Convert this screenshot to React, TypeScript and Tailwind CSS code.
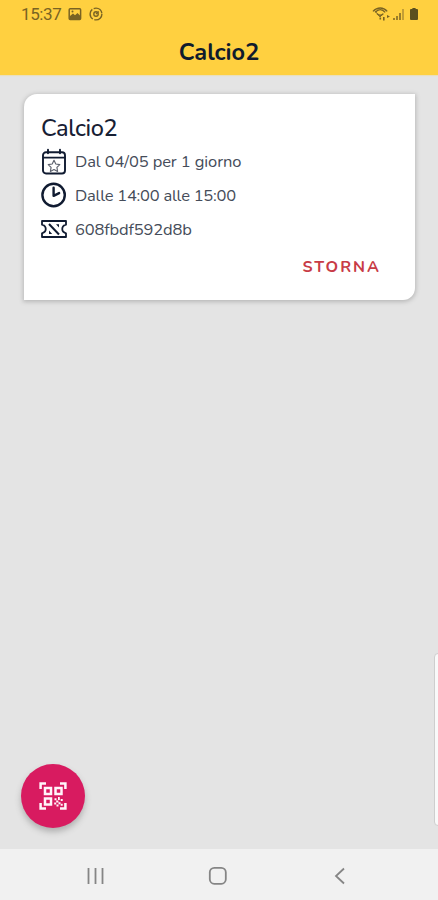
import React from "react";

function StatusBar() {
  return (
    <div className="flex h-7 items-center pl-[21px] pr-[19px] font-['Roboto',sans-serif] text-[#796323]">
      <span className="w-[47px] text-[17px] leading-7 tracking-[-0.4px]">15:37</span>
      <svg className="mr-[7px]" width="14" height="14" viewBox="0 0 14 14">
        <rect x="1.2" y="1.8" width="11.4" height="10.6" rx="1" fill="none" stroke="currentColor" strokeWidth="1.5" />
        <path d="M2 12V9l3-2.5 2 1.7L9.5 6 12 8.5V12z" fill="currentColor" />
        <circle cx="4.5" cy="4.5" r="1" fill="currentColor" />
      </svg>
      <svg width="14" height="14" viewBox="0 0 14 14" fill="none" stroke="currentColor" strokeWidth="1.4">
        <circle cx="7" cy="7" r="5.9" strokeDasharray="10.8 1.55" />
        <circle cx="7" cy="7" r="2.2" />
        <path d="M7 7l2.8-2.5" strokeWidth="1.1" />
      </svg>
      <svg className="ml-auto" width="47" height="16" viewBox="0 0 47 16" fill="none">
        <path d="M1 5.4C5.2.8 11.3.8 15.2 5.4M3.2 6.4c3-3.7 7-3.7 10 0M5 7.6c2 2.2 4.4 2.2 6.4 0" stroke="currentColor" strokeWidth="1.4" />
        <path d="M3 5l5 6 3-3" stroke="currentColor" strokeWidth=".9" />
        <path d="M7.5 11.5h1.6v2H7.5zM11 11h1.6v3.5H11zM15 9l3 1.5-3 1.5z" fill="currentColor" />
        <path d="M21 12h2v2h-2zM24 10h2v4h-2zM27 7h2v7h-2z" fill="#9b7e2a" />
        <path d="M30 3h2v11h-2z" fill="#c49f35" />
        <path d="M38 4q0-1 1-1h1.4V2h3.2v1H45q1 0 1 1v9q0 1-1 1h-6q-1 0-1-1z" fill="#5b501f" />
      </svg>
    </div>
  );
}

function CalendarIcon() {
  return (
    <svg width="26" height="28" viewBox="0 0 26 28" fill="none" stroke="#101b31" strokeWidth="1.9" strokeLinecap="round">
      <rect x="2" y="4.3" width="22" height="21.2" rx="3" />
      <path d="M2.5 9.6h21M7 1.7v3.5M19 1.7v3.5" />
      <path d="M13 12.3l1.8 3.7 4 .6-2.9 2.8.7 4-3.6-1.9-3.6 1.9.7-4-2.9-2.8 4-.6z" stroke="#5d626e" strokeWidth="1.15" strokeLinejoin="round" />
    </svg>
  );
}

function ClockIcon() {
  return (
    <svg className="-translate-y-px" width="26" height="26" viewBox="0 0 26 26" fill="none" stroke="#101b31" strokeWidth="2.4">
      <circle cx="12.6" cy="13" r="11.2" />
      <path d="M12.6 5.8v8l5.5-2.7" strokeLinejoin="round" strokeLinecap="round" />
    </svg>
  );
}

function TicketIcon() {
  return (
    <svg className="-translate-y-px" width="26" height="20" viewBox="0 0 26 20" fill="none" stroke="#101b31" strokeWidth="1.8">
      <path d="M1 2h24v3.7c-5 1.5-5 7.1 0 8.6V18H1v-3.7c5-1.5 5-7.1 0-8.6z" strokeLinejoin="round" />
      <path d="M8 5l10 10.5" strokeWidth="2" />
      <path d="M15 5.2h3v3.2zM8 11.5v3.6h3.2z" fill="#101b31" stroke="none" />
    </svg>
  );
}

function QrIcon() {
  return (
    <svg width="28" height="28" viewBox="0 0 28 28" fill="none" stroke="#fff5fa" strokeWidth="2.5">
      <path d="M1.6 7V1.6H7M21 1.6h5.4V7M1.6 21v5.4H7M21 26.4h5.4V21" />
      <rect x="6" y="6" width="6" height="6" />
      <rect x="16.5" y="6" width="6" height="6" />
      <rect x="6" y="16.5" width="6" height="6" />
      <path d="M15.5 16.2h2v2h-2zM19 15h1.8v3H19zM21.7 17h2v2h-2zM17.2 18.5h2.2v2h-2.2zM15.2 20.5h2v2h-2zM19.5 20.3h2v2h-2zM21.7 21.8h2v2h-2zM17.5 22.5h2v2h-2z" fill="#fff5fa" stroke="none" />
    </svg>
  );
}

function InfoRow({ icon, children, tracking }: { icon: React.ReactNode; children: React.ReactNode; tracking: string }) {
  return (
    <div className="flex h-[34px] items-center">
      <span className="flex w-[34px] shrink-0">{icon}</span>
      <span className={`whitespace-nowrap text-[16.5px] leading-[34px] text-[#454c59] ${tracking}`}>{children}</span>
    </div>
  );
}

export default function App() {
  return (
    <div className="relative flex h-[900px] w-full flex-col overflow-hidden bg-[#e4e4e4] font-['Nunito','Lato',sans-serif]">
      <header className="h-[75px] shrink-0 bg-[#ffd040] shadow-[0_1px_1px_#e9dfbd]">
        <StatusBar />
        <h1 className="text-center text-[23.5px] leading-[48px] font-bold text-[#101b2d]">Calcio2</h1>
      </header>
      <main className="flex-1 pt-[19px] pr-[23px] pl-6">
        <section className="flex h-[206px] flex-col rounded-tl-[13px] rounded-br-[12px] bg-white pt-[18px] pl-[17px] shadow-[0_1px_4px_1px_#b9b9b9]">
          <h2 className="h-[33px] text-[23.5px] leading-8 font-medium tracking-[-0.35px] text-[#172034]">Calcio2</h2>
          <InfoRow icon={<CalendarIcon />} tracking="tracking-[-0.1px]">Dal 04/05 per 1 giorno</InfoRow>
          <InfoRow icon={<ClockIcon />} tracking="tracking-[-0.24px]">Dalle 14:00 alle 15:00</InfoRow>
          <InfoRow icon={<TicketIcon />} tracking="tracking-[-0.16px]">608fbdf592d8b</InfoRow>
          <button className="mt-[3px] mr-[34px] self-end text-[16px] leading-[34px] font-bold tracking-[2px] text-[#c83b46]">STORNA</button>
        </section>
      </main>
      <nav className="flex h-[51px] shrink-0 items-center bg-[#f1f1f1] pt-[2px] pr-[93px] pl-[87px]">
        <svg width="17" height="18" viewBox="0 0 17 18" stroke="#858585" strokeWidth="1.8"><path d="M1.5 1v16M8.5 1v16M15.5 1v16" /></svg>
        <svg className="mr-auto ml-[104px]" width="20" height="20" viewBox="0 0 20 20" fill="none" stroke="#858585" strokeWidth="1.8"><rect x="1.8" y="1.8" width="16" height="16" rx="4.5" /></svg>
        <svg width="11" height="18" viewBox="0 0 11 18" fill="none" stroke="#858585" strokeWidth="1.8"><path d="M10 1.5L2 9l8 7.5" /></svg>
      </nav>
      <button className="absolute bottom-[72px] left-[21px] flex size-16 items-center justify-center rounded-full bg-[#d81b60] shadow-[0_4px_6px_#b0b0b0]">
        <QrIcon />
      </button>
      <div className="absolute top-[653px] -right-1 h-[173px] w-2 rounded-l-[4px] border border-[#cecece] bg-[#f9f9f9]" />
    </div>
  );
}
